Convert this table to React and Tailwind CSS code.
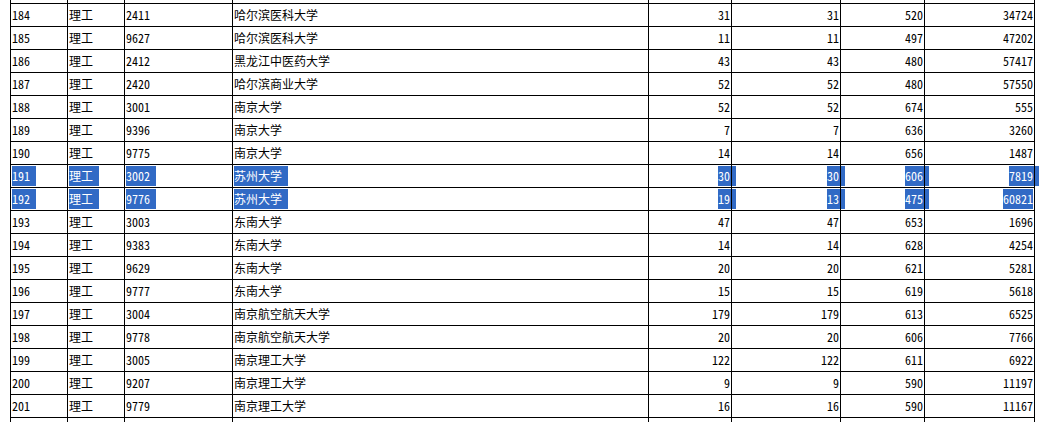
import React from "react";

// 录取数据（截图中的片段）
const rows = [
  [184, "理工", "2411", "哈尔滨医科大学", 31, 31, 520, 34724],
  [185, "理工", "9627", "哈尔滨医科大学", 11, 11, 497, 47202],
  [186, "理工", "2412", "黑龙江中医药大学", 43, 43, 480, 57417],
  [187, "理工", "2420", "哈尔滨商业大学", 52, 52, 480, 57550],
  [188, "理工", "3001", "南京大学", 52, 52, 674, 555],
  [189, "理工", "9396", "南京大学", 7, 7, 636, 3260],
  [190, "理工", "9775", "南京大学", 14, 14, 656, 1487],
  [191, "理工", "3002", "苏州大学", 30, 30, 606, 7819],
  [192, "理工", "9776", "苏州大学", 19, 13, 475, 60821],
  [193, "理工", "3003", "东南大学", 47, 47, 653, 1696],
  [194, "理工", "9383", "东南大学", 14, 14, 628, 4254],
  [195, "理工", "9629", "东南大学", 20, 20, 621, 5281],
  [196, "理工", "9777", "东南大学", 15, 15, 619, 5618],
  [197, "理工", "3004", "南京航空航天大学", 179, 179, 613, 6525],
  [198, "理工", "9778", "南京航空航天大学", 20, 20, 606, 7766],
  [199, "理工", "3005", "南京理工大学", 122, 122, 611, 6922],
  [200, "理工", "9207", "南京理工大学", 9, 9, 590, 11197],
  [201, "理工", "9779", "南京理工大学", 16, 16, 590, 11167],
];

const widths = ["w-[57px]", "w-[57px]", "w-[108px]", "w-[416px]", "w-[83px]", "w-[109px]", "w-[84px]", "w-[110px]"];

// 选中的行（蓝色高亮）
const selected = [191, 192];

const cellBase = "border-r border-b border-black p-0 px-px whitespace-nowrap align-middle";

// 左对齐选中块：文字后面带一个空格宽度
const SelLeft = ({ children }) => (
  <span className="inline-block align-top leading-[20px] bg-[#316AC5] text-white pr-[6px]">{children}</span>
);

// 右对齐选中块：空格越过右边框，边框线压在蓝底上
const SelRight = ({ children, tail = true }) =>
  tail ? (
    <span className="inline-block align-top leading-[20px] text-white pr-[6px] mr-[-6px] bg-[linear-gradient(to_left,#316AC5_4px,#000_4px,#000_5px,#316AC5_5px)]">
      {children}
    </span>
  ) : (
    <span className="inline-block align-top leading-[20px] bg-[#316AC5] text-white">{children}</span>
  );

export default function App() {
  return (
    <div className="h-[422px] overflow-hidden bg-white pl-[10px] text-black font-['Noto_Sans_Mono_CJK_SC','Noto_Sans_CJK_SC',sans-serif] text-[12px] leading-[20px]">
      <table className="table-fixed border-separate border-spacing-0 border-l border-black">
        <tbody>
          {/* 上一行的末端 */}
          <tr>
            {widths.map((w, i) => (
              <td key={i} className={`${cellBase} ${w} h-[4px]`}></td>
            ))}
          </tr>

          {rows.map((r) => {
            const isSel = selected.includes(r[0]);
            return (
              <tr key={r[0]}>
                {r.map((v, i) => {
                  const right = i >= 4;
                  let content = v;
                  if (isSel) {
                    if (right) {
                      const tail = !(r[0] === 192 && i === 7);
                      content = <SelRight tail={tail}>{v}</SelRight>;
                    } else {
                      content = <SelLeft>{v}</SelLeft>;
                    }
                  }
                  return (
                    <td key={i} className={`${cellBase} h-[23px] ${right ? "text-right" : "text-left"}`}>
                      {content}
                    </td>
                  );
                })}
              </tr>
            );
          })}

          {/* 下一行的开头 */}
          <tr>
            {widths.map((w, i) => (
              <td key={i} className={`${cellBase} h-[23px]`}></td>
            ))}
          </tr>
        </tbody>
      </table>
    </div>
  );
}
